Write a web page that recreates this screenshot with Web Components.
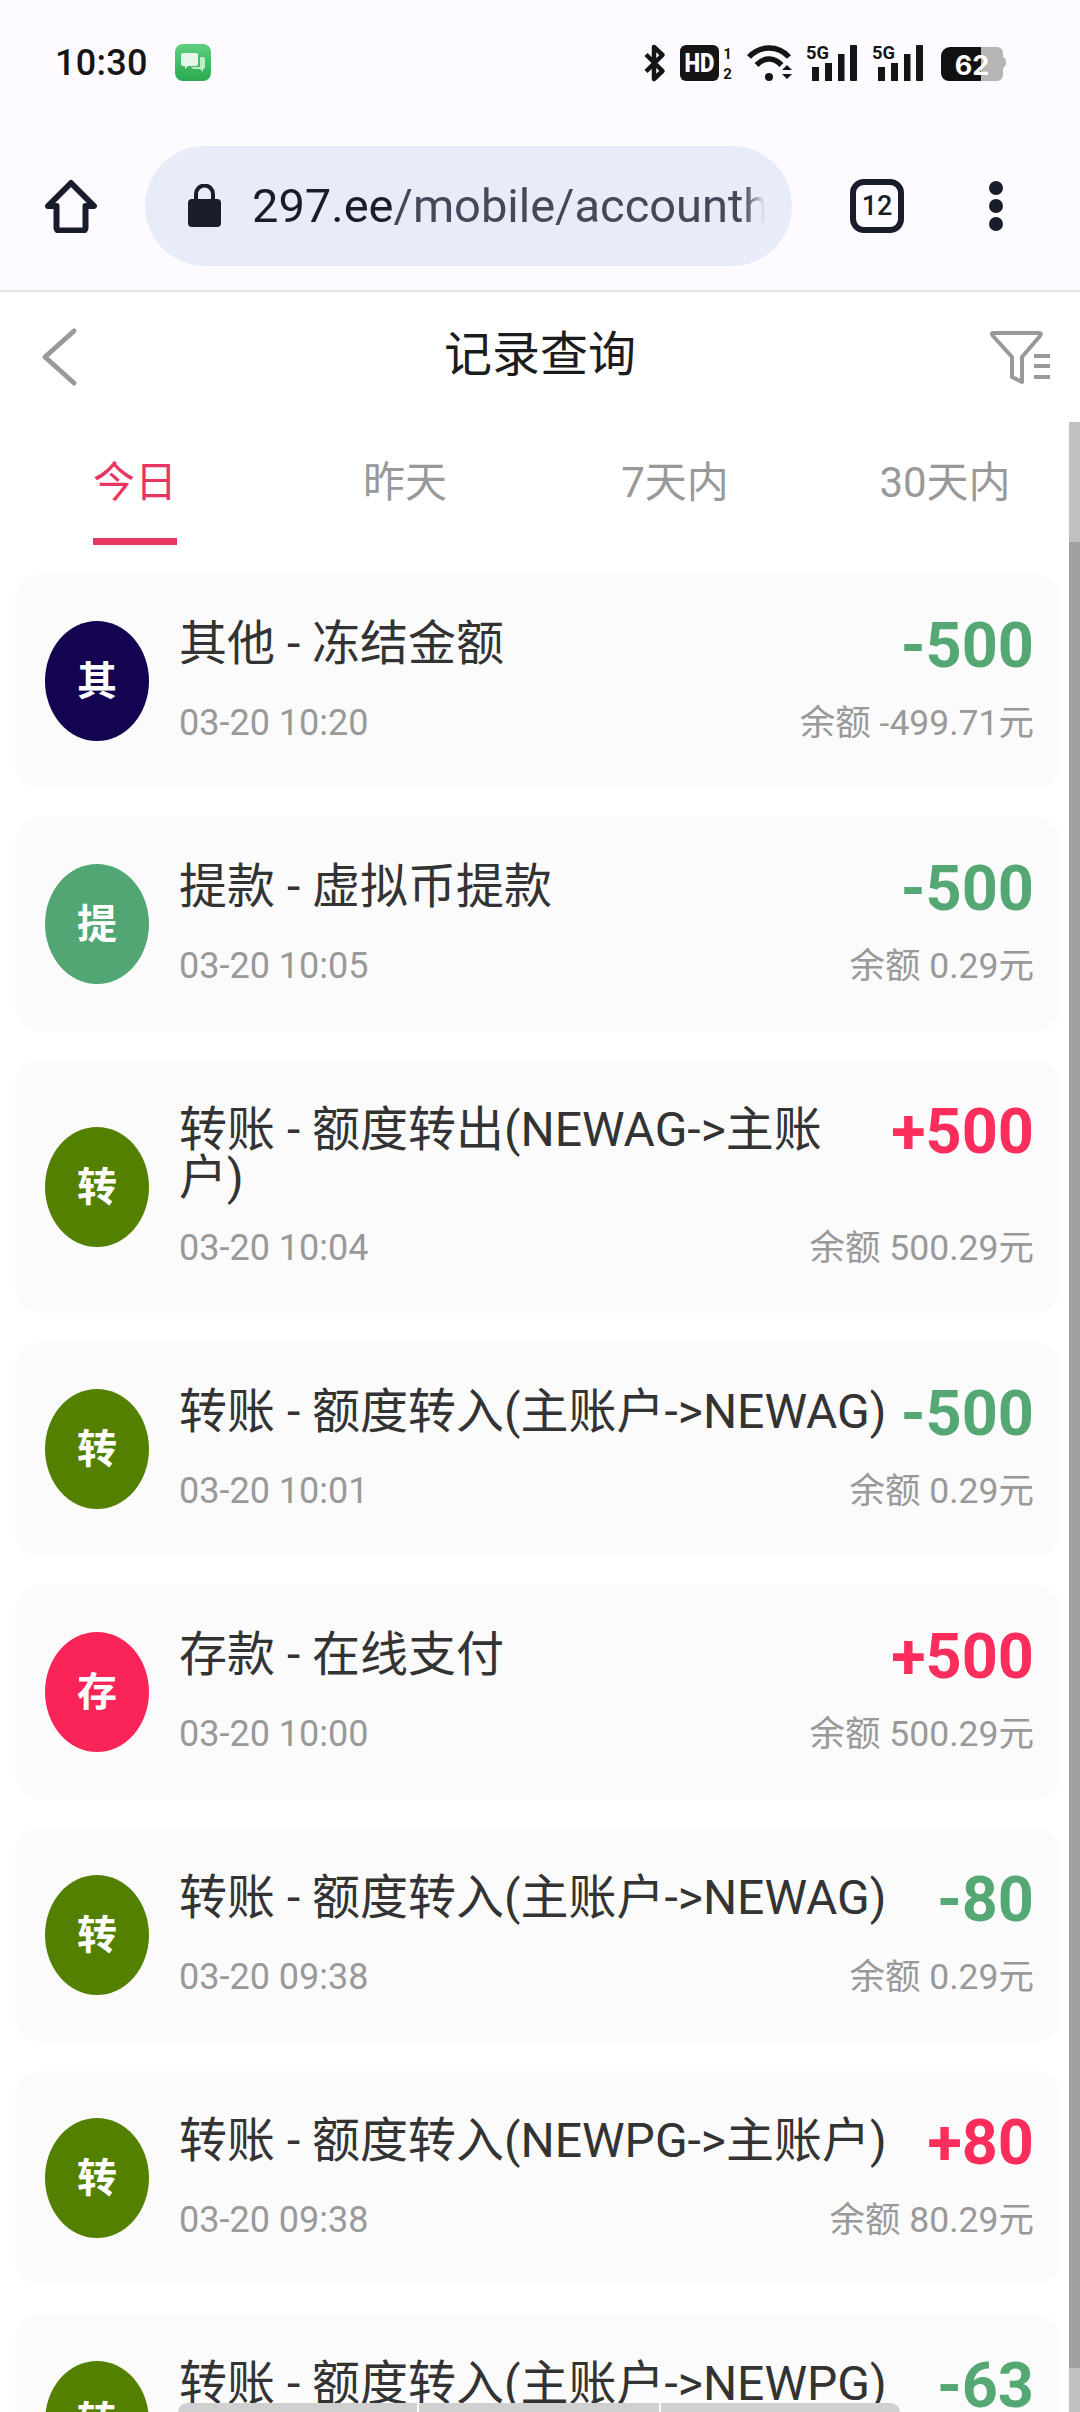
<!DOCTYPE html>
<html lang="zh">
<head>
<meta charset="utf-8">
<title>记录查询</title>
<style>
  html, body { margin: 0; padding: 0; background: #fff; }
  body {
    width: 1080px;
    height: 2412px;
    overflow: hidden;
    position: relative;
    font-family: Roboto, "Noto Sans CJK SC", sans-serif;
  }
</style>
</head>
<body>
<status-bar></status-bar>
<browser-bar></browser-bar>
<page-header heading="记录查询"></page-header>
<record-page>
  <tab-row slot="tabs" active="0" items="今日,昨天,7天内,30天内"></tab-row>
  <record-card mark="其" tone="#140350" heading="其他 - 冻结金额" time="03-20 10:20" amount="-500" balance="余额 -499.71元"></record-card>
  <record-card mark="提" tone="#52a674" heading="提款 - 虚拟币提款" time="03-20 10:05" amount="-500" balance="余额 0.29元"></record-card>
  <record-card mark="转" tone="#548000" heading="转账 - 额度转出(NEWAG->主账户)" time="03-20 10:04" amount="+500" balance="余额 500.29元"></record-card>
  <record-card mark="转" tone="#548000" heading="转账 - 额度转入(主账户->NEWAG)" time="03-20 10:01" amount="-500" balance="余额 0.29元"></record-card>
  <record-card mark="存" tone="#fb2458" heading="存款 - 在线支付" time="03-20 10:00" amount="+500" balance="余额 500.29元"></record-card>
  <record-card mark="转" tone="#548000" heading="转账 - 额度转入(主账户->NEWAG)" time="03-20 09:38" amount="-80" balance="余额 0.29元"></record-card>
  <record-card mark="转" tone="#548000" heading="转账 - 额度转入(NEWPG->主账户)" time="03-20 09:38" amount="+80" balance="余额 80.29元"></record-card>
  <record-card mark="转" tone="#548000" heading="转账 - 额度转入(主账户->NEWPG)" time="03-20 09:37" amount="-63" balance="余额 0.29元"></record-card>
</record-page>
<selection-handle></selection-handle>

<script>
const FONT = 'Roboto, "Noto Sans CJK SC", sans-serif';

class StatusBar extends HTMLElement {
  constructor() {
    super();
    this.attachShadow({ mode: 'open' });
  }

  connectedCallback() {
    const signal = `
      <svg width="52" height="38" viewBox="0 0 52 38">
        <text x="0" y="15" font-family="Roboto" font-weight="700" font-size="18" textLength="23" lengthAdjust="spacingAndGlyphs" fill="#151515">5G</text>
        <rect x="6" y="23" width="7" height="14" fill="#151515"/>
        <rect x="19" y="19" width="7" height="18" fill="#151515"/>
        <rect x="32" y="10" width="6.500" height="27" fill="#151515"/>
        <rect x="44" y="1" width="7" height="36" rx="1" fill="#151515"/>
      </svg>`;
    this.shadowRoot.innerHTML = `
      <style>
        :host {
          display: flex;
          align-items: center;
          height: 125px;
          padding: 0 74px 0 55px;
          box-sizing: border-box;
          background: #fdfbff;
          color: #151515;
          font-family: ${FONT};
        }
        .time { font-size: 36px; font-weight: 500; letter-spacing: 0.3px; margin-right: 27px; }
        .icons { margin-left: auto; display: flex; align-items: center; }
        svg { display: block; flex: none; overflow: visible; }
      </style>
      <span class="time">10:30</span>
      <svg width="36" height="37" viewBox="0 0 36 37">
        <defs>
          <linearGradient id="g" x1="0" y1="0" x2="0" y2="1">
            <stop offset="0" stop-color="#5fd07f"/>
            <stop offset="1" stop-color="#29a950"/>
          </linearGradient>
        </defs>
        <rect width="36" height="37" rx="8" fill="url(#g)"/>
        <path d="M8 9h13a2 2 0 0 1 2 2v9a2 2 0 0 1-2 2h-8l-3 3v-3H8a2 2 0 0 1-2-2v-9a2 2 0 0 1 2-2z" fill="#e4f7e9"/>
        <path d="M25 13h3a2 2 0 0 1 2 2v8a2 2 0 0 1-2 2v3l-3-3h-7l-2-2h8a1 1 0 0 0 1-1z" fill="#bfeccb"/>
      </svg>
      <div class="icons">
        <svg width="24" height="38" viewBox="0 0 24 38" style="margin-right:13px">
          <path d="M3 10.500 19.500 27 11 35V3l8.500 8L3 27.500" fill="none" stroke="#151515" stroke-width="4.500" stroke-linejoin="round"/>
        </svg>
        <svg width="54" height="38" viewBox="0 0 54 38" style="margin-right:13px">
          <rect x="0" y="1" width="39" height="36" rx="6" fill="#151515"/>
          <text x="19.500" y="28" text-anchor="middle" font-family="Roboto" font-weight="900" font-size="26" textLength="30" lengthAdjust="spacingAndGlyphs" fill="#fdfbff">HD</text>
          <text x="47.500" y="15" text-anchor="middle" font-family="Roboto" font-weight="700" font-size="15" fill="#151515">1</text>
          <text x="47.500" y="35" text-anchor="middle" font-family="Roboto" font-weight="700" font-size="15" fill="#151515">2</text>
        </svg>
        <svg width="46" height="38" viewBox="0 0 46 38" style="margin-right:13px">
          <path d="M2 13C13 1 31 1 42 13" fill="none" stroke="#151515" stroke-width="5.500"/>
          <path d="M9.500 21C17 13 27 13 34.500 21" fill="none" stroke="#151515" stroke-width="5.500"/>
          <circle cx="22" cy="33" r="4" fill="#151515"/>
          <path d="M35 26l5-5 5 5zM35 30l5 5 5-5z" fill="#151515"/>
        </svg>
        <div style="margin-right:14px">${signal}</div>
        <div style="margin-right:16px">${signal}</div>
        <svg width="66" height="38" viewBox="0 0 66 38">
          <path d="M41 3H10a9 9 0 0 0-9 9v17a8 8 0 0 0 8 8h32z" fill="#111"/>
          <path d="M41 3h16a6 6 0 0 1 6 6v4c2 1 3 2 3 5s-1 5-3 6v7a6 6 0 0 1-6 6H41z" fill="#b5b5b5"/>
          <text x="32" y="31" text-anchor="middle" font-family="Inter" font-weight="700" font-size="27" fill="#fff">62</text>
        </svg>
      </div>
    `;
  }
}

class BrowserBar extends HTMLElement {
  constructor() {
    super();
    this.attachShadow({ mode: 'open' });
  }

  connectedCallback() {
    this.shadowRoot.innerHTML = `
      <style>
        :host {
          display: flex;
          align-items: center;
          height: 167px;
          padding: 0 0 4px 44px;
          box-sizing: border-box;
          background: #fdfbff;
          border-bottom: 2px solid #e3e3ec;
          font-family: ${FONT};
          color: #191c2a;
        }
        svg { display: block; flex: none; }
        .omni {
          display: flex;
          align-items: center;
          width: 647px;
          height: 120px;
          margin-left: 47px;
          padding-left: 43px;
          box-sizing: border-box;
          background: #e8ecf9;
          border-radius: 60px;
        }
        .url {
          width: 513px;
          margin-left: 31px;
          overflow: hidden;
          white-space: nowrap;
          font-size: 47px;
          line-height: 60px;
          color: #454858;
          -webkit-mask-image: linear-gradient(to right, #000 96%, transparent 100%);
        }
        .url b { font-weight: 400; color: #191c2a; }
        .count {
          width: 54px;
          height: 54px;
          margin-left: 58px;
          box-sizing: border-box;
          border: 6px solid #191c2a;
          border-radius: 14px;
          display: flex;
          align-items: center;
          justify-content: center;
          font-size: 27px;
          font-weight: 500;
        }
        .more { margin-left: 85px; display: flex; flex-direction: column; gap: 4px; }
        .more i { display: block; width: 14px; height: 14px; border-radius: 50%; background: #191c2a; }
      </style>
      <svg width="54" height="54" viewBox="0 0 54 54">
        <path d="M27 4 50 27H41.500V49a2.500 2.500 0 0 1-2.500 2.500H15a2.500 2.500 0 0 1-2.500-2.500V27H4Z" fill="none" stroke="#191c2a" stroke-width="6" stroke-linejoin="round"/>
      </svg>
      <div class="omni">
        <svg width="33" height="43" viewBox="0 0 33 43">
          <path d="M8 17V10a8.500 8.500 0 0 1 17 0v7" fill="none" stroke="#191c2a" stroke-width="4"/>
          <rect x="0" y="15" width="33" height="28" rx="4" fill="#191c2a"/>
        </svg>
        <div class="url"><b>297.ee</b>/mobile/accounth</div>
      </div>
      <div class="count">12</div>
      <div class="more"><i></i><i></i><i></i></div>
    `;
  }
}

class PageHeader extends HTMLElement {
  constructor() {
    super();
    this.attachShadow({ mode: 'open' });
  }

  connectedCallback() {
    this.shadowRoot.innerHTML = `
      <style>
        :host {
          display: grid;
          grid-template-columns: 1fr auto 1fr;
          align-items: center;
          height: 130px;
          padding: 0 28px 0 40px;
          box-sizing: border-box;
          background: #fff;
          font-family: ${FONT};
        }
        svg { display: block; }
        svg:last-child { justify-self: end; }
        h1 { margin: 0 12px 14px 0; font-size: 48px; font-weight: 400; color: #1c1c1c; }
      </style>
      <svg width="38" height="60" viewBox="0 0 38 60">
        <path d="M34 4 5 30l29 26" fill="none" stroke="#999" stroke-width="5" stroke-linecap="round" stroke-linejoin="round"/>
      </svg>
      <h1>${this.getAttribute('heading')}</h1>
      <svg width="62" height="56" viewBox="0 0 62 56">
        <path d="M3 4H49Q52 4 50 7L32 28V53L22 48V28L3 7Q1 4 3 4Z" fill="none" stroke="#999" stroke-width="4" stroke-linejoin="round"/>
        <path d="M44 27H60M44 37H60M44 48H60" fill="none" stroke="#999" stroke-width="4"/>
      </svg>
    `;
  }
}

class RecordPage extends HTMLElement {
  constructor() {
    super();
    this.attachShadow({ mode: 'open' });
  }

  connectedCallback() {
    this.shadowRoot.innerHTML = `
      <style>
        :host { display: block; position: relative; background: #fff; }
        .list {
          display: flex;
          flex-direction: column;
          gap: 29px;
          padding: 29px 19px 0 15px;
        }
        /* overlay scrollbar of the inner page */
        .track { position: absolute; top: 0; right: 0; bottom: 0; width: 11px; background: #c0c0c0; }
        .thumb { position: absolute; top: 120px; left: 0; width: 11px; height: 1826px; background: #a0a0a0; }
      </style>
      <slot name="tabs"></slot>
      <div class="list"><slot></slot></div>
      <div class="track"><div class="thumb"></div></div>
    `;
  }
}

class TabRow extends HTMLElement {
  constructor() {
    super();
    this.attachShadow({ mode: 'open' });
  }

  connectedCallback() {
    const active = Number(this.getAttribute('active'));
    const items = this.getAttribute('items').split(',');
    this.shadowRoot.innerHTML = `
      <style>
        :host {
          display: flex;
          height: 123px;
          background: #fff;
          font-family: ${FONT};
        }
        .tab {
          flex: 1;
          display: flex;
          flex-direction: column;
          align-items: center;
          color: #999;
          font-size: 42px;
          line-height: 122px;
          position: relative;
        }
        .tab.on { color: #e83562; }
        .tab.on::after {
          content: '';
          position: absolute;
          left: 50%;
          bottom: 0;
          width: 84px;
          height: 7px;
          margin-left: -42px;
          background: #e83562;
        }
      </style>
      ${items.map((t, i) => `<div class="tab${i === active ? ' on' : ''}">${t}</div>`).join('')}
    `;
  }
}

class RecordCard extends HTMLElement {
  constructor() {
    super();
    this.attachShadow({ mode: 'open' });
  }

  connectedCallback() {
    const amount = this.getAttribute('amount');
    const color = amount.startsWith('+') ? '#fb2d5c' : '#55a874';
    this.shadowRoot.innerHTML = `
      <style>
        :host {
          display: flex;
          align-items: center;
          gap: 30px;
          padding: 42px 27px 0 30px;
          box-sizing: border-box;
          background: #fbfbfb;
          border-radius: 26px;
          font-family: ${FONT};
        }
        .mark {
          flex: none;
          width: 104px;
          height: 120px;
          padding-bottom: 6px;
          box-sizing: border-box;
          margin-top: -42px;
          border-radius: 50%;
          display: flex;
          align-items: center;
          justify-content: center;
          background: ${this.getAttribute('tone')};
          color: #fff;
          font-size: 40px;
          font-weight: 700;
        }
        .body { flex: 1; min-width: 0; }
        .top { display: flex; align-items: flex-start; min-height: 87px; }
        .title {
          flex: 1;
          min-width: 0;
          padding: 4px 0 26px;
          color: #333;
          font-size: 48px;
          line-height: 48px;
          word-break: break-all;
        }
        .amount {
          flex: none;
          margin-left: 8px;
          color: ${color};
          font-size: 63px;
          font-weight: 700;
          line-height: 60px;
        }
        .bottom {
          display: flex;
          justify-content: space-between;
          height: 40px;
          margin-bottom: 45px;
          color: #999;
          font-size: 36px;
          line-height: 40px;
        }
        .bottom span:last-child { font-size: 35.500px; }
      </style>
      <div class="mark">${this.getAttribute('mark')}</div>
      <div class="body">
        <div class="top">
          <div class="title"></div>
          <div class="amount">${amount}</div>
        </div>
        <div class="bottom">
          <span>${this.getAttribute('time')}</span>
          <span>${this.getAttribute('balance')}</span>
        </div>
      </div>
    `;
    this.shadowRoot.querySelector('.title').textContent = this.getAttribute('heading');
  }
}

class SelectionHandle extends HTMLElement {
  constructor() {
    super();
    this.attachShadow({ mode: 'open' });
  }

  connectedCallback() {
    this.shadowRoot.innerHTML = `
      <style>
        :host {
          position: absolute;
          left: 178px;
          top: 2403px;
          width: 722px;
          height: 9px;
          display: flex;
          gap: 2px;
          border-radius: 9px 9px 0 0;
          overflow: hidden;
        }
        i { flex: 1; background: #d0d0d0; }
      </style>
      <i></i><i></i><i></i>
    `;
  }
}

customElements.define('status-bar', StatusBar);
customElements.define('browser-bar', BrowserBar);
customElements.define('page-header', PageHeader);
customElements.define('record-page', RecordPage);
customElements.define('tab-row', TabRow);
customElements.define('record-card', RecordCard);
customElements.define('selection-handle', SelectionHandle);
</script>
</body>
</html>
